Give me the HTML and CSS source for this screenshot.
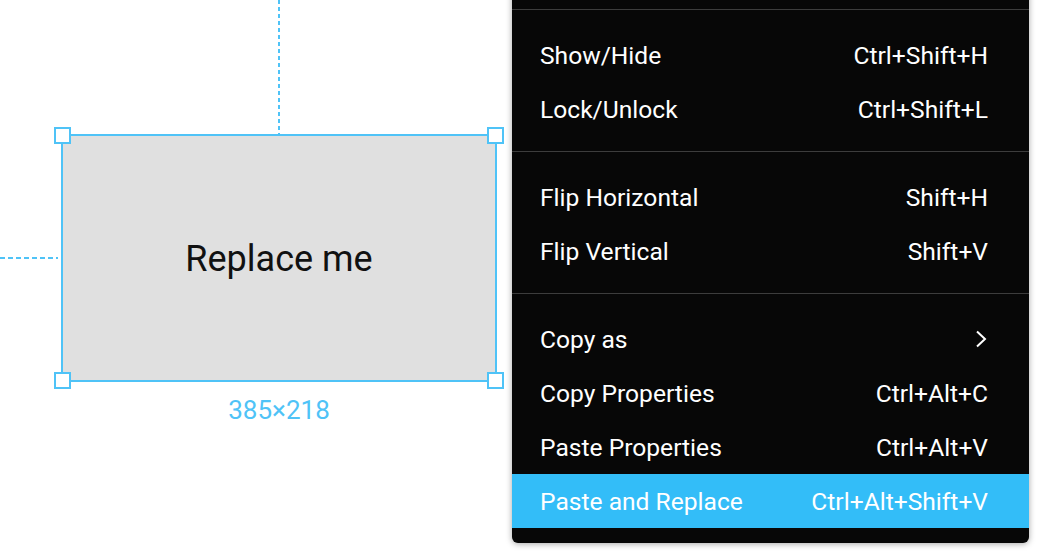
FILE: index.html
```html
<!DOCTYPE html>
<html>
<head>
<meta charset="utf-8">
<link rel="stylesheet" href="styles.css">
</head>
<body>
<div class="canvas">
  <div class="guide guide-v"></div>
  <div class="guide guide-h"></div>
  <div class="shape">
    <span class="shape-text">Replace me</span>
    <span class="handle h-tl"></span>
    <span class="handle h-tr"></span>
    <span class="handle h-bl"></span>
    <span class="handle h-br"></span>
  </div>
  <div class="size-label">385×218</div>
</div>
<div class="menu">
  <div class="section section-top"></div>
  <div class="section">
    <div class="item"><span>Show/Hide</span><span>Ctrl+Shift+H</span></div>
    <div class="item"><span>Lock/Unlock</span><span>Ctrl+Shift+L</span></div>
  </div>
  <div class="section">
    <div class="item"><span>Flip Horizontal</span><span>Shift+H</span></div>
    <div class="item"><span>Flip Vertical</span><span>Shift+V</span></div>
  </div>
  <div class="section">
    <div class="item"><span>Copy as</span><svg class="chev" width="12" height="18" viewBox="0 0 12 18"><path d="M2 1.5 L10 9 L2 16.5" fill="none" stroke="#fff" stroke-width="2"/></svg></div>
    <div class="item"><span>Copy Properties</span><span>Ctrl+Alt+C</span></div>
    <div class="item"><span>Paste Properties</span><span>Ctrl+Alt+V</span></div>
    <div class="item active"><span>Paste and Replace</span><span>Ctrl+Alt+Shift+V</span></div>
  </div>
</div>
</body>
</html>
```
FILE: styles.css
```css
* { box-sizing: border-box; }
html, body {
  margin: 0;
  padding: 0;
  width: 1048px;
  height: 551px;
  overflow: hidden;
  background: #fff;
  font-family: Roboto, "Liberation Sans", sans-serif;
}
.canvas {
  position: relative;
  width: 1048px;
  height: 551px;
}
.guide-v {
  position: absolute;
  left: 278px;
  top: 0;
  width: 2px;
  height: 134px;
  background: repeating-linear-gradient(to bottom, #4fc3f7 0 4px, transparent 4px 7px);
}
.guide-h {
  position: absolute;
  left: 0;
  top: 257px;
  width: 58px;
  height: 2px;
  background: repeating-linear-gradient(to right, #4fc3f7 0 5px, transparent 5px 8px);
}
.shape {
  position: absolute;
  left: 61px;
  top: 134px;
  width: 436px;
  height: 248px;
  background: #e0e0e0;
  border: 2px solid #4fc3f7;
  display: flex;
  align-items: center;
  justify-content: center;
}
.shape-text {
  font-size: 36px;
  color: #111;
  margin-top: 2px;
}
.handle {
  position: absolute;
  width: 17px;
  height: 17px;
  background: #fff;
  border: 2px solid #4fc3f7;
}
.h-tl { left: -9px; top: -9px; }
.h-tr { right: -9px; top: -9px; }
.h-bl { left: -9px; bottom: -9px; }
.h-br { right: -9px; bottom: -9px; }
.size-label {
  position: absolute;
  left: 179px;
  width: 200px;
  top: 395px;
  text-align: center;
  color: #4fc3f7;
  font-size: 26px;
}
.menu {
  position: absolute;
  left: 512px;
  top: -21px;
  width: 517px;
  background: #070707;
  border-radius: 6px;
  box-shadow: 0 1px 6px rgba(0,0,0,0.35);
  color: #fff;
  font-size: 24.6px;
}
.section {
  padding: 18px 0 15px;
  border-top: 1px solid #3c3c3c;
}
.section-top {
  height: 30px;
  padding: 0;
  border-top: none;
}
.item {
  height: 54px;
  padding: 0 41px 0 28px;
  display: flex;
  align-items: center;
  justify-content: space-between;
}
.item.active {
  background: #33bdf8;
}
.chev {
  margin-right: 1px;
}
```
